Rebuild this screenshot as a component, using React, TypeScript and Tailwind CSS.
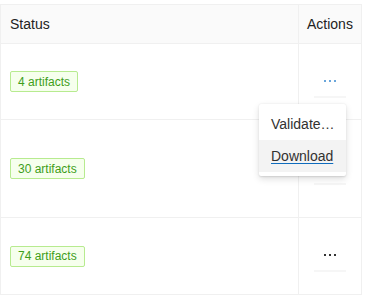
import React from "react";

const rows = [
  { count: 4, height: "h-[76px]", dots: "bg-[#6aa6db]" },
  { count: 30, height: "h-[98px]", dots: "bg-[#333333]" },
  { count: 74, height: "h-[76px]", dots: "bg-[#333333]" },
];

function MoreButton({ dotClass }: { dotClass: string }) {
  return (
    <button className="w-8 h-8 flex items-center justify-center gap-[3px] border-b-2 border-[#f6f6f6] bg-white">
      <span className={`w-[2px] h-[2px] ${dotClass}`} />
      <span className={`w-[2px] h-[2px] ${dotClass}`} />
      <span className={`w-[2px] h-[2px] ${dotClass}`} />
    </button>
  );
}

export default function App() {
  return (
    <div
      className="relative bg-white w-[370px] h-[301px] pt-[4px]"
      style={{ fontFamily: '"Liberation Sans", Arial, sans-serif' }}
    >
      <div className="w-[362px] border border-[#f0f0f0]">
        {/* Header */}
        <div className="grid grid-cols-[297px_1px_62px] h-[39px] bg-[#fafafa] border-b border-[#f0f0f0] text-sm text-[#222]">
          <div className="flex items-center pl-[9px]">Status</div>
          <div className="bg-[#f0f0f0]" />
          <div className="flex items-center pl-2">Actions</div>
        </div>

        {/* Rows */}
        {rows.map((row, i) => (
          <div
            key={row.count}
            className={`grid grid-cols-[297px_1px_62px] ${row.height} ${
              i < rows.length - 1 ? "border-b border-[#f0f0f0]" : ""
            }`}
          >
            <div className="flex items-center pl-[9px]">
              <span className="h-[21px] px-[7px] flex items-center border border-[#b7eb8f] bg-[#f6ffed] text-[#3f9e1a] text-xs rounded-[2px]">
                {row.count} artifacts
              </span>
            </div>
            <div className="bg-[#f0f0f0]" />
            <div className="flex items-center justify-center">
              <MoreButton dotClass={row.dots} />
            </div>
          </div>
        ))}
      </div>

      {/* Open menu */}
      <div className="absolute left-[259px] top-[104px] w-[87px] py-1 bg-white rounded-[2px] shadow-[0_3px_7px_rgba(0,0,0,0.13),0_0.6px_1.8px_rgba(0,0,0,0.11)] text-sm text-[#323130]">
        <div className="h-8 flex items-center pl-3">Validate…</div>
        <div className="h-8 flex items-center pl-3 bg-[#f3f3f3]">
          <span className="underline decoration-[#0f6cbd] underline-offset-2">Download</span>
        </div>
      </div>
    </div>
  );
}
